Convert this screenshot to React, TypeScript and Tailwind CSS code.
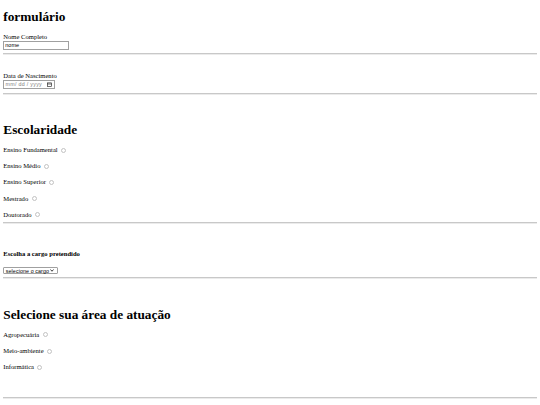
import React from 'react';

const serif = "font-['Liberation_Serif',serif]";
const sans = "font-['Liberation_Sans',Arial,sans-serif]";

function Rule({ className = '' }: { className?: string }) {
  return <div className={`h-0 border-t border-b border-t-[#c8c8c8] border-b-[#ebebeb] ${className}`} />;
}

function RadioRow({ label, name, className = '' }: { label: string; name: string; className?: string }) {
  return (
    <label className={`flex items-center h-[8px] text-[6.6px] leading-[8px] ${className}`}>
      <span>{label}</span>
      <input
        type="radio"
        name={name}
        className="appearance-none ml-[3.4px] w-[5px] h-[5px] rounded-full border border-[#c2c2c2] bg-white"
      />
    </label>
  );
}

export default function App() {
  const escolaridade = ['Ensino Fundamental', 'Ensino Médio', 'Ensino Superior', 'Mestrado', 'Doutorado'];
  const areas = ['Agropecuária', 'Meio-ambiente', 'Informática'];

  return (
    <div className={`w-[540px] h-[405px] overflow-hidden bg-white text-black px-[3.3px] ${serif}`}>
      <div className="h-[8.5px]" />
      <h1 className="text-[13.3px] leading-[15px] font-bold">formulário</h1>

      {/* Nome */}
      <div className="mt-[9.5px] text-[6.6px] leading-[8px]">Nome Completo</div>
      <input
        type="text"
        defaultValue="nome"
        className={`block w-[66px] h-[8.5px] border border-[#a0a0a0] px-[1px] text-[5.5px] leading-[6px] text-black ${sans}`}
      />
      <Rule className="mt-[3.5px]" />

      {/* Data */}
      <div className="mt-[17px] text-[6.6px] leading-[8px]">Data de Nascimento</div>
      <div className="flex items-center justify-between w-[51.7px] h-[8.5px] border border-[#a0a0a0] pl-[1.2px] pr-[2px]">
        <span className={`text-[5.3px] leading-[6px] text-[#808080] tracking-[0.3px] whitespace-pre ${sans}`}>mm/ dd / yyyy</span>
        <svg width="5" height="5" viewBox="0 0 10 10" fill="none" stroke="#222" strokeWidth="1.3">
          <rect x="1" y="1.8" width="8" height="7.4" />
          <line x1="1" y1="4" x2="9" y2="4" />
        </svg>
      </div>
      <Rule className="mt-[4.5px]" />

      {/* Escolaridade */}
      <h1 className="mt-[26.5px] text-[13.3px] leading-[15px] font-bold">Escolaridade</h1>
      <div className="mt-[9.5px] flex flex-col gap-[8.2px]">
        {escolaridade.map((e) => (
          <RadioRow key={e} label={e} name="escolaridade" />
        ))}
      </div>
      <Rule className="mt-[3.2px]" />

      {/* Cargo */}
      <div className="mt-[26px] text-[6.6px] leading-[8px] font-bold">Escolha a cargo pretendido</div>
      <div className="mt-[9px] flex items-center gap-[1px] w-[54.4px] h-[7.5px] border border-[#a0a0a0] rounded-[1px] px-[1.5px]">
        <span className={`text-[5.3px] leading-[6px] text-black tracking-[0.1px] ${sans}`}>selecione o cargo</span>
        <svg width="4" height="3" viewBox="0 0 8 6" fill="none" stroke="#111" strokeWidth="1.6">
          <polyline points="1,1 4,4.5 7,1" />
        </svg>
      </div>
      <Rule className="mt-[3px]" />

      {/* Área */}
      <h1 className="mt-[27.5px] text-[13.3px] leading-[15px] font-bold">Selecione sua área de atuação</h1>
      <div className="mt-[9px] flex flex-col gap-[8.2px]">
        {areas.map((a) => (
          <RadioRow key={a} label={a} name="area" />
        ))}
      </div>
      <Rule className="mt-[26px]" />
    </div>
  );
}
